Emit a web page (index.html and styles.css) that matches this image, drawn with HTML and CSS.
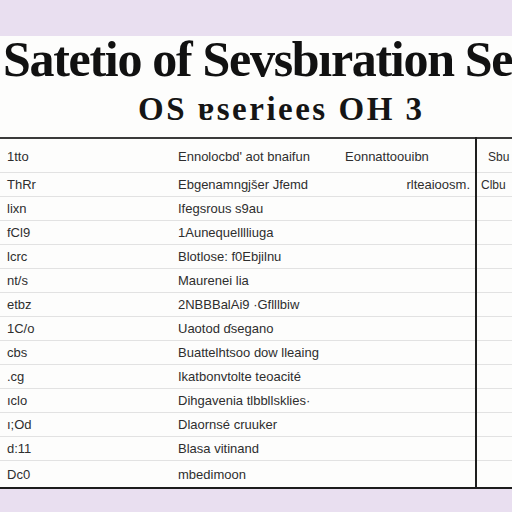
FILE: index.html
```html
<!DOCTYPE html>
<html>
<head>
<meta charset="utf-8">
<link rel="stylesheet" href="styles.css">
</head>
<body>
<div class="band"></div>
<main class="sheet">
  <h1 class="title">Satetio of Sevsbıration Se</h1>
  <h2 class="subtitle">OS ɐseriees OH 3</h2>
  <table class="grid">
    <colgroup>
      <col class="c1"><col class="c2"><col class="c3"><col class="c4">
    </colgroup>
    <tbody>
      <tr class="first"><td>1tto</td><td>Ennolocbd' aot bnaifun</td><td class="hd">Eonnattoouibn</td><td class="side indent">Sbu</td></tr>
      <tr><td>ThRr</td><td>Ebgenamngjšer Jfemd</td><td class="hd right">rlteaioosm.</td><td class="side">Clbu</td></tr>
      <tr><td>lixn</td><td>Ifegsrous s9au</td><td></td><td class="side"></td></tr>
      <tr><td>fCl9</td><td>1Aunequelllliuga</td><td></td><td class="side"></td></tr>
      <tr><td>lcrc</td><td>Blotlose: f0Ebjilnu</td><td></td><td class="side"></td></tr>
      <tr><td>nt/s</td><td>Maurenei lia</td><td></td><td class="side"></td></tr>
      <tr><td>etbz</td><td>2NBBBalAi9 ·Gflllbiw</td><td></td><td class="side"></td></tr>
      <tr><td>1C/o</td><td>Uaotod ɗsegano</td><td></td><td class="side"></td></tr>
      <tr><td>cbs</td><td>Buattelhtsoo dow lleaing</td><td></td><td class="side"></td></tr>
      <tr><td>.cg</td><td>Ikatbonvtolte teoacité</td><td></td><td class="side"></td></tr>
      <tr><td>ıclo</td><td>Dihgavenia tlbbllsklies·</td><td></td><td class="side"></td></tr>
      <tr><td>ı;Od</td><td>Dlaornsé cruuker</td><td></td><td class="side"></td></tr>
      <tr><td>d:11</td><td>Blasa vitinand</td><td></td><td class="side"></td></tr>
      <tr class="last"><td>Dc0</td><td>mbedimoon</td><td></td><td class="side"></td></tr>
    </tbody>
  </table>
</main>
<div class="band bottom"></div>
</body>
</html>
```

FILE: styles.css
```css
html, body {
  margin: 0;
  padding: 0;
  background: #e9e0ef;
  width: 512px;
  height: 512px;
  overflow: hidden;
}
.band {
  height: 36px;
  background: #e9dff0;
}
.band.bottom {
  height: 23px;
}
.sheet {
  background: #fdfdfc;
  height: 453px;
  overflow: hidden;
  display: flex;
  flex-direction: column;
}
.title {
  margin: 0;
  padding: 1px 0 0 3px;
  font-family: "Liberation Serif", "Times New Roman", serif;
  font-weight: bold;
  font-size: 50px;
  line-height: 44px;
  letter-spacing: -1.3px;
  color: #111;
  white-space: nowrap;
}
.subtitle {
  margin: 0;
  padding: 10px 0 0 138px;
  font-family: "Liberation Serif", "Times New Roman", serif;
  font-weight: bold;
  font-size: 33px;
  line-height: 36px;
  letter-spacing: 2.5px;
  color: #151515;
  white-space: nowrap;
}
.grid {
  margin-top: 10px;
  width: 512px;
  border-collapse: collapse;
  table-layout: fixed;
  border-top: 2px solid #3a3a3a;
  border-bottom: 2px solid #1c1c1c;
  font-family: "Liberation Sans", Arial, sans-serif;
  font-size: 13px;
  color: #2e2e2e;
}
.c1 { width: 170px; }
.c2 { width: 170px; }
.c3 { width: 136px; }
.c4 { width: 36px; }
.grid td {
  height: 23px;
  padding: 0 0 0 7px;
  border-bottom: 1px solid #e2e2e2;
  white-space: nowrap;
  overflow: hidden;
}
.grid td:nth-child(2) { padding-left: 8px; }
.grid td:nth-child(3) { padding-left: 5px; }
.grid tr.first td { height: 31px; padding-top: 2px; }
.grid tr.last td { height: 26px; border-bottom: none; }
.grid td.side {
  border-left: 2px solid #1e1e1e;
  padding-left: 4px;
  font-size: 12px;
}
.grid td.side.indent { padding-left: 11px; }
.grid td.right {
  text-align: right;
  padding-right: 5px;
}
```
